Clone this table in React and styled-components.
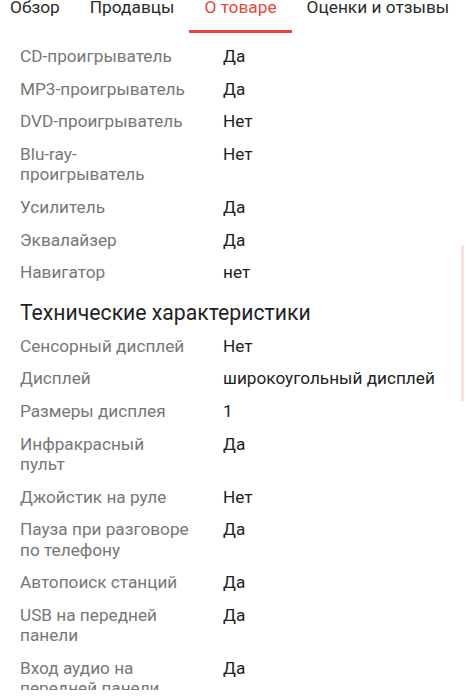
import styled, { createGlobalStyle } from 'styled-components'

const GlobalStyle = createGlobalStyle`
  html, body {
    margin: 0;
    padding: 0;
    background: #fff;
    overflow: hidden;
  }
  body {
    font-family: Roboto, "Noto Sans", sans-serif;
    -webkit-font-smoothing: antialiased;
  }
`

const Screen = styled.div`
  position: relative;
  width: 466px;
  height: 699px;
  overflow: hidden;
`

const Tabs = styled.nav`
  display: flex;
  margin: -3px 0 0 -5px;
  white-space: nowrap;
`

const Tab = styled.div`
  padding: 0 15px 13px;
  font-size: 17.3px;
  line-height: 20px;
  color: ${({ active }) => (active ? '#e2483b' : '#2b2b2b')};
  border-bottom: 3px solid ${({ active }) => (active ? '#e2483b' : 'transparent')};
`

const Content = styled.div`
  padding: 13px 20px 0;
`

const SpecList = styled.dl`
  display: grid;
  grid-template-columns: 172px 1fr;
  column-gap: 31px;
  row-gap: 12.4px;
  margin: 0;
`

const Label = styled.dt`
  font-size: 17.2px;
  line-height: 20.3px;
  color: #777;
`

const Value = styled.dd`
  margin: 0;
  font-size: 17.2px;
  line-height: 20.3px;
  color: #222;
  white-space: nowrap;
`

const SectionTitle = styled.h2`
  margin: 17px 0 10px;
  font-size: 21.2px;
  line-height: 26px;
  font-weight: 400;
  color: #1f1f1f;
`

const ScrollThumb = styled.div`
  position: absolute;
  right: 2px;
  top: 245px;
  width: 3px;
  height: 156px;
  background: #fbe0e0;
`

const BottomEdge = styled.div`
  position: absolute;
  left: 0;
  right: 0;
  bottom: 0;
  height: 9px;
  background: #fff;
`

const general = [
  ['CD-проигрыватель', 'Да'],
  ['MP3-проигрыватель', 'Да'],
  ['DVD-проигрыватель', 'Нет'],
  ['Blu-ray-\u200bпроигрыватель', 'Нет'],
  ['Усилитель', 'Да'],
  ['Эквалайзер', 'Да'],
  ['Навигатор', 'нет'],
]

const tech = [
  ['Сенсорный дисплей', 'Нет'],
  ['Дисплей', 'широкоугольный дисплей'],
  ['Размеры дисплея', '1'],
  ['Инфракрасный пульт', 'Да'],
  ['Джойстик на руле', 'Нет'],
  ['Пауза при разговоре по телефону', 'Да'],
  ['Автопоиск станций', 'Да'],
  ['USB на передней панели', 'Да'],
  ['Вход аудио на передней панели', 'Да'],
]

const Specs = ({ items }) => (
  <SpecList>
    {items.flatMap(([k, v]) => [
      <Label key={k + '-k'}>{k}</Label>,
      <Value key={k + '-v'}>{v}</Value>,
    ])}
  </SpecList>
)

export default function App() {
  return (
    <Screen>
      <GlobalStyle />
      <Tabs>
        <Tab>Обзор</Tab>
        <Tab>Продавцы</Tab>
        <Tab active>О товаре</Tab>
        <Tab>Оценки и отзывы</Tab>
      </Tabs>
      <Content>
        <Specs items={general} />
        <SectionTitle>Технические характеристики</SectionTitle>
        <Specs items={tech} />
      </Content>
      <ScrollThumb />
      <BottomEdge />
    </Screen>
  )
}
